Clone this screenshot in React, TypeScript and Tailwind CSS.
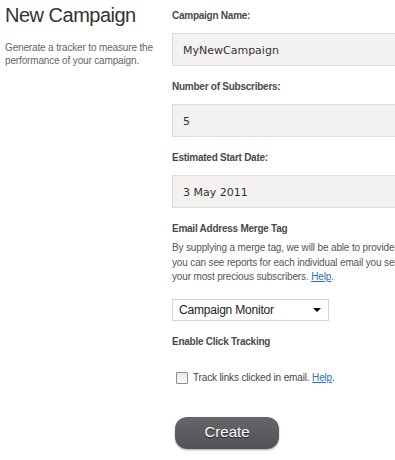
import React from "react";

const arial = { fontFamily: '"Liberation Sans", Arial, sans-serif' };

function Label({ children, className = "" }: { children: React.ReactNode; className?: string }) {
  return (
    <div className={`text-[10px] leading-[13px] font-bold tracking-[-0.25px] text-[#4a4a4a] ${className}`}>{children}</div>
  );
}

function Field({ value, className = "" }: { value: string; className?: string }) {
  return (
    <div
      className={`h-[33px] w-[260px] border border-[#dcdcdc] bg-[#f3f2f0] flex items-center pl-[10px] pt-[3px] text-[11px] text-[#333] ${className}`}
      style={{ fontFamily: '"DejaVu Sans", Verdana, sans-serif' }}
    >
      {value}
    </div>
  );
}

export default function App() {
  return (
    <div className="w-[395px] h-[460px] overflow-hidden bg-white flex" style={arial}>
      <div className="w-[166px] shrink-0 pl-[5px]">
        <h1 className="text-[20px] leading-[24px] pt-[3px] tracking-[-0.5px] text-[#333] font-normal">New Campaign</h1>
        <p className="mt-[14px] text-[10px] leading-[13px] tracking-[-0.15px] text-[#666]">
          Generate a tracker to measure the
          <br />
          performance of your campaign.
        </p>
      </div>
      <div className="w-[240px] shrink-0 pl-[6px]">
        <Label className="mt-[9px]">Campaign Name:</Label>
        <Field value="MyNewCampaign" className="mt-[11px]" />
        <Label className="mt-[14px]">Number of Subscribers:</Label>
        <Field value="5" className="mt-[11px]" />
        <Label className="mt-[14px]">Estimated Start Date:</Label>
        <Field value="3 May 2011" className="mt-[11px]" />
        <Label className="mt-[14px]">Email Address Merge Tag</Label>
        <p className="mt-[6px] w-[260px] text-[10px] leading-[14.5px] tracking-[-0.15px] text-[#555] whitespace-nowrap">
          By supplying a merge tag, we will be able to provide
          <br />
          you can see reports for each individual email you send
          <br />
          your most precious subscribers.{" "}
          <a className="text-[#2a6fc9] underline" href="#">Help</a>.
        </p>
        <div className="mt-[14px] h-[22px] w-[157px] border border-[#d6d6d6] bg-white flex items-center justify-between pl-[6px] pr-[7px]">
          <span className="text-[12px] tracking-[-0.2px] text-[#222]">Campaign Monitor</span>
          <span className="w-0 h-0 border-l-[4px] border-r-[4px] border-t-[4px] border-l-transparent border-r-transparent border-t-black" />
        </div>
        <Label className="mt-[14px]">Enable Click Tracking</Label>
        <div className="mt-[23px] ml-[4px] flex items-center gap-[5px] h-[14px]">
          <span className="w-[12px] h-[12px] border border-[#8f8f8f] rounded-[1px] bg-gradient-to-b from-[#e8e8e8] to-[#fbfbfb] shrink-0" />
          <span className="text-[10px] tracking-[-0.15px] text-[#444] whitespace-nowrap">
            Track links clicked in email.{" "}
            <a className="text-[#2a6fc9] underline" href="#">Help</a>.
          </span>
        </div>
        <button
          className="mt-[32px] ml-[3px] w-[104px] h-[32px] rounded-[12px] bg-gradient-to-b from-[#67666b] to-[#525156] text-white text-[15px] shadow-[0_1px_2px_rgba(0,0,0,0.35)] [text-shadow:0_1px_1px_rgba(0,0,0,0.6)]"
          style={arial}
        >
          Create
        </button>
      </div>
    </div>
  );
}
